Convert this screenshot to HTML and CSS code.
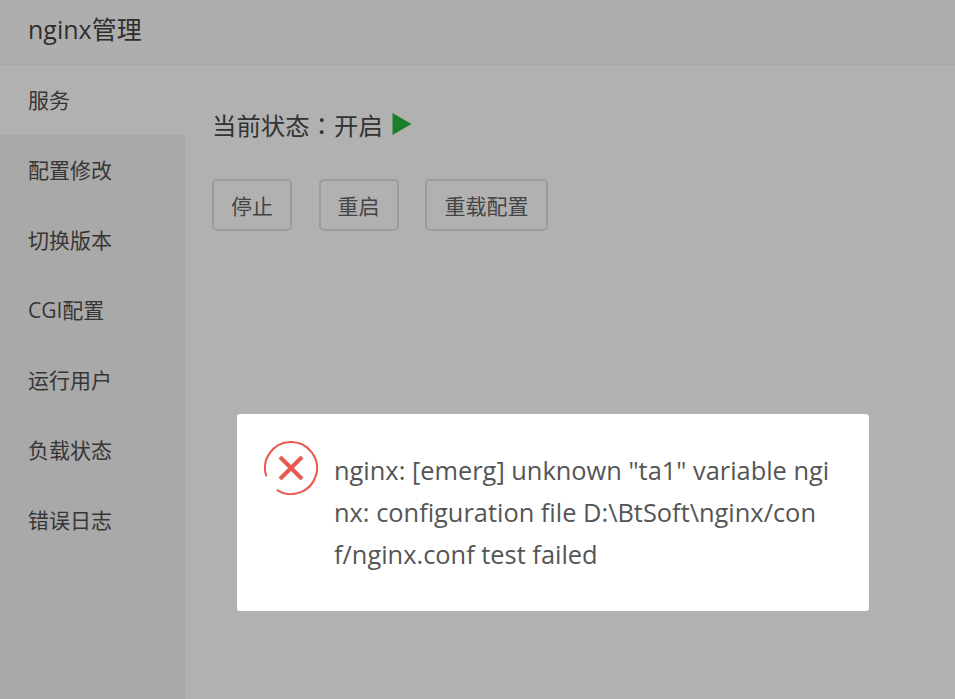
FILE: index.html
```html
<!DOCTYPE html>
<html lang="zh-CN">
<head>
    <meta charset="UTF-8">
    <meta name="viewport" content="width=device-width, initial-scale=1.0">
    <title>nginx管理</title>
    <link rel="stylesheet" href="styles.css">
</head>
<body>
    <div class="top-bar">nginx管理</div>

    <div class="main">
        <div class="side-menu">
            <div class="menu-item active">服务</div>
            <div class="menu-item">配置修改</div>
            <div class="menu-item">切换版本</div>
            <div class="menu-item">CGI配置</div>
            <div class="menu-item">运行用户</div>
            <div class="menu-item">负载状态</div>
            <div class="menu-item">错误日志</div>
        </div>

        <div class="content">
            <div class="status">
                <span>当前状态<span class="colon" lang="zh-TW">：</span>开启</span>
                <svg class="play-icon" width="20" height="24" viewBox="0 0 20 24">
                    <path d="M0.5 1 L19.5 12 L0.5 23 Z" fill="#1c7f2b"/>
                </svg>
            </div>
            <div class="actions">
                <button class="btn btn-stop">停止</button>
                <button class="btn btn-restart">重启</button>
                <button class="btn btn-reload">重载配置</button>
            </div>
        </div>
    </div>

    <div class="dialog">
        <svg class="error-icon" width="54" height="54" viewBox="0 0 54 54">
            <path d="M12.8 48.8 A26 26 0 1 0 2.4 35.4" fill="none" stroke="#e9584c" stroke-width="2"/>
            <path d="M16 16 L38 38 M38 16 L16 38" fill="none" stroke="#e9584c" stroke-width="4"/>
        </svg>
        <div class="dialog-text">nginx: [emerg] unknown "ta1" variable ngi<br>nx: configuration file D:\BtSoft\nginx/con<br>f/nginx.conf test failed</div>
    </div>
</body>
</html>
```

FILE: styles.css
```css
* {
    box-sizing: border-box;
}

body {
    margin: 0;
    width: 955px;
    height: 699px;
    overflow: hidden;
    background-color: #b1b1b1;
    color: #333;
    font-family: "Open Sans", "Noto Sans CJK SC", sans-serif;
    display: flex;
    flex-direction: column;
}

.top-bar {
    height: 65px;
    padding-left: 28px;
    line-height: 58px;
    font-size: 25px;
    color: #2e2e2e;
    background-color: #aeaeae;
    border-bottom: 1px solid #a9a9a9;
}

.main {
    flex-grow: 1;
    display: flex;
}

.side-menu {
    width: 185px;
    background-color: #a9a9a9;
}

.menu-item {
    height: 70px;
    padding-left: 28px;
    line-height: 70px;
    font-size: 21px;
    color: #363636;
}

.menu-item.active {
    background-color: #b1b1b1;
}

.content {
    flex-grow: 1;
    padding: 41px 0 0 27px;
}

.status {
    display: flex;
    align-items: center;
    gap: 9px;
    height: 36px;
    font-size: 24.4px;
    color: #333;
}

.colon {
    font-family: "Noto Sans CJK TC", sans-serif;
}

.actions {
    display: flex;
    gap: 26.5px;
    margin-top: 37px;
}

.btn {
    height: 52px;
    padding: 0;
    background-color: transparent;
    border: 2px solid #9c9c9c;
    border-radius: 5px;
    font-family: inherit;
    font-size: 21px;
    color: #444;
}

.btn-stop,
.btn-restart {
    width: 80px;
}

.btn-reload {
    width: 123px;
}

/* overlay message */
.dialog {
    position: absolute;
    left: 237px;
    top: 414px;
    width: 632px;
    height: 197px;
    padding: 27px 0 0 27px;
    background-color: #fff;
    border-radius: 3px;
    display: flex;
    align-items: flex-start;
    gap: 16px;
}

.error-icon {
    flex-shrink: 0;
}

.dialog-text {
    margin-top: 8px;
    font-size: 25.4px;
    line-height: 42px;
    color: #555;
    white-space: nowrap;
}
```
